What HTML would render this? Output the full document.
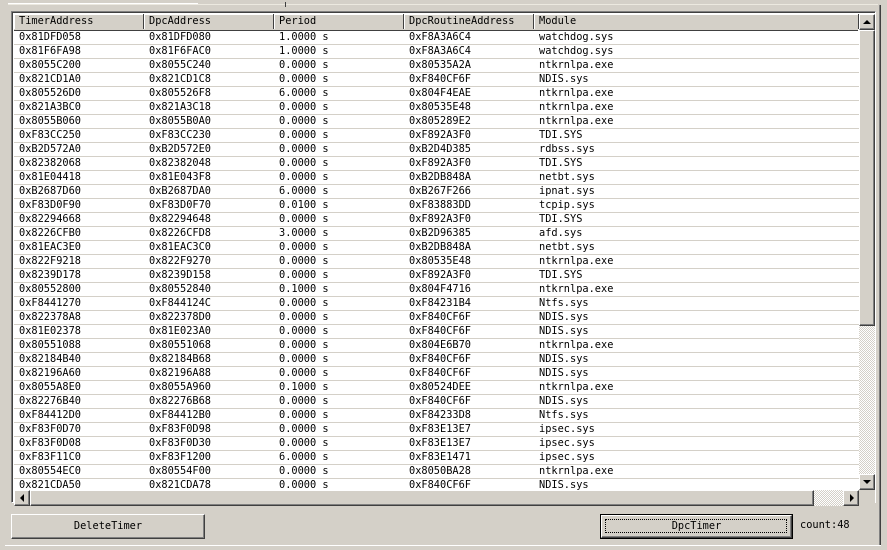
<!DOCTYPE html><html><head><style>
body{margin:0;width:887px;height:550px;background:#d4d0c8;position:relative;overflow:hidden;font-family:"DejaVu Sans Mono","Liberation Mono",monospace;font-size:10.3px;color:#000}
.lv{position:absolute;left:11px;top:11px;width:863px;height:490px;border-top:1px solid #808080;border-left:1px solid #808080;border-right:1px solid #fff;border-bottom:1px solid #fff;background:#fff}
.lv2{position:absolute;left:0;top:0;right:0;bottom:0;border-top:1px solid #404040;border-left:1px solid #404040}
.hdr{position:absolute;left:1px;top:1px;height:16px;width:844px;background:#d4d0c8;border-bottom:1px solid #404040}
.hc{position:absolute;top:0;height:15px;line-height:15px;padding-left:5px;border-right:1px solid #404040;box-shadow:inset 1px 1px #fff;box-sizing:border-box}
.rows{position:absolute;left:1px;top:18px;width:845px;height:459px;overflow:hidden}
.r{height:14px;line-height:13px;border-bottom:1px solid #d4d0c8;position:relative;box-sizing:border-box}
.r span{position:absolute;top:0}
.vs{position:absolute;left:846px;top:1px;width:16px;height:476px;background:repeating-conic-gradient(#d4d0c8 0 25%,#fff 0 50%) 0 0/2px 2px}
.hs{position:absolute;left:1px;top:477px;width:845px;height:16px;background:repeating-conic-gradient(#d4d0c8 0 25%,#fff 0 50%) 0 0/2px 2px}
.btn{position:absolute;background:#d4d0c8;border-top:1px solid #fff;border-left:1px solid #fff;border-right:1px solid #404040;border-bottom:1px solid #404040;box-shadow:inset -1px -1px #808080;box-sizing:border-box}
.tri{position:absolute;width:0;height:0}
</style></head><body>
<div style="position:absolute;left:8px;top:3px;width:190px;height:1px;background:#fff"></div>
<div style="position:absolute;left:8px;top:4px;width:870px;height:1px;background:#ece9e0"></div>
<div style="position:absolute;left:285px;top:2px;width:1px;height:5px;background:#404040"></div>
<div style="position:absolute;left:879px;top:5px;width:1px;height:540px;background:#808080"></div>
<div style="position:absolute;left:880px;top:5px;width:1px;height:540px;background:#404040"></div>
<div style="position:absolute;left:5px;top:545px;width:876px;height:1px;background:#fff"></div>
<div class="lv"><div class="lv2">
<div class="hdr">
<div class="hc" style="left:0;width:130px">TimerAddress</div>
<div class="hc" style="left:130px;width:130px">DpcAddress</div>
<div class="hc" style="left:260px;width:130px">Period</div>
<div class="hc" style="left:390px;width:130px">DpcRoutineAddress</div>
<div class="hc" style="left:520px;width:325px">Module</div>
</div>
<div class="rows" id="rows">
<div class="r"><span style="left:5px">0x81DFD058</span><span style="left:135px">0x81DFD080</span><span style="left:265px">1.0000 s</span><span style="left:395px">0xF8A3A6C4</span><span style="left:525px">watchdog.sys</span></div>
<div class="r"><span style="left:5px">0x81F6FA98</span><span style="left:135px">0x81F6FAC0</span><span style="left:265px">1.0000 s</span><span style="left:395px">0xF8A3A6C4</span><span style="left:525px">watchdog.sys</span></div>
<div class="r"><span style="left:5px">0x8055C200</span><span style="left:135px">0x8055C240</span><span style="left:265px">0.0000 s</span><span style="left:395px">0x80535A2A</span><span style="left:525px">ntkrnlpa.exe</span></div>
<div class="r"><span style="left:5px">0x821CD1A0</span><span style="left:135px">0x821CD1C8</span><span style="left:265px">0.0000 s</span><span style="left:395px">0xF840CF6F</span><span style="left:525px">NDIS.sys</span></div>
<div class="r"><span style="left:5px">0x805526D0</span><span style="left:135px">0x805526F8</span><span style="left:265px">6.0000 s</span><span style="left:395px">0x804F4EAE</span><span style="left:525px">ntkrnlpa.exe</span></div>
<div class="r"><span style="left:5px">0x821A3BC0</span><span style="left:135px">0x821A3C18</span><span style="left:265px">0.0000 s</span><span style="left:395px">0x80535E48</span><span style="left:525px">ntkrnlpa.exe</span></div>
<div class="r"><span style="left:5px">0x8055B060</span><span style="left:135px">0x8055B0A0</span><span style="left:265px">0.0000 s</span><span style="left:395px">0x805289E2</span><span style="left:525px">ntkrnlpa.exe</span></div>
<div class="r"><span style="left:5px">0xF83CC250</span><span style="left:135px">0xF83CC230</span><span style="left:265px">0.0000 s</span><span style="left:395px">0xF892A3F0</span><span style="left:525px">TDI.SYS</span></div>
<div class="r"><span style="left:5px">0xB2D572A0</span><span style="left:135px">0xB2D572E0</span><span style="left:265px">0.0000 s</span><span style="left:395px">0xB2D4D385</span><span style="left:525px">rdbss.sys</span></div>
<div class="r"><span style="left:5px">0x82382068</span><span style="left:135px">0x82382048</span><span style="left:265px">0.0000 s</span><span style="left:395px">0xF892A3F0</span><span style="left:525px">TDI.SYS</span></div>
<div class="r"><span style="left:5px">0x81E04418</span><span style="left:135px">0x81E043F8</span><span style="left:265px">0.0000 s</span><span style="left:395px">0xB2DB848A</span><span style="left:525px">netbt.sys</span></div>
<div class="r"><span style="left:5px">0xB2687D60</span><span style="left:135px">0xB2687DA0</span><span style="left:265px">6.0000 s</span><span style="left:395px">0xB267F266</span><span style="left:525px">ipnat.sys</span></div>
<div class="r"><span style="left:5px">0xF83D0F90</span><span style="left:135px">0xF83D0F70</span><span style="left:265px">0.0100 s</span><span style="left:395px">0xF83883DD</span><span style="left:525px">tcpip.sys</span></div>
<div class="r"><span style="left:5px">0x82294668</span><span style="left:135px">0x82294648</span><span style="left:265px">0.0000 s</span><span style="left:395px">0xF892A3F0</span><span style="left:525px">TDI.SYS</span></div>
<div class="r"><span style="left:5px">0x8226CFB0</span><span style="left:135px">0x8226CFD8</span><span style="left:265px">3.0000 s</span><span style="left:395px">0xB2D96385</span><span style="left:525px">afd.sys</span></div>
<div class="r"><span style="left:5px">0x81EAC3E0</span><span style="left:135px">0x81EAC3C0</span><span style="left:265px">0.0000 s</span><span style="left:395px">0xB2DB848A</span><span style="left:525px">netbt.sys</span></div>
<div class="r"><span style="left:5px">0x822F9218</span><span style="left:135px">0x822F9270</span><span style="left:265px">0.0000 s</span><span style="left:395px">0x80535E48</span><span style="left:525px">ntkrnlpa.exe</span></div>
<div class="r"><span style="left:5px">0x8239D178</span><span style="left:135px">0x8239D158</span><span style="left:265px">0.0000 s</span><span style="left:395px">0xF892A3F0</span><span style="left:525px">TDI.SYS</span></div>
<div class="r"><span style="left:5px">0x80552800</span><span style="left:135px">0x80552840</span><span style="left:265px">0.1000 s</span><span style="left:395px">0x804F4716</span><span style="left:525px">ntkrnlpa.exe</span></div>
<div class="r"><span style="left:5px">0xF8441270</span><span style="left:135px">0xF844124C</span><span style="left:265px">0.0000 s</span><span style="left:395px">0xF84231B4</span><span style="left:525px">Ntfs.sys</span></div>
<div class="r"><span style="left:5px">0x822378A8</span><span style="left:135px">0x822378D0</span><span style="left:265px">0.0000 s</span><span style="left:395px">0xF840CF6F</span><span style="left:525px">NDIS.sys</span></div>
<div class="r"><span style="left:5px">0x81E02378</span><span style="left:135px">0x81E023A0</span><span style="left:265px">0.0000 s</span><span style="left:395px">0xF840CF6F</span><span style="left:525px">NDIS.sys</span></div>
<div class="r"><span style="left:5px">0x80551088</span><span style="left:135px">0x80551068</span><span style="left:265px">0.0000 s</span><span style="left:395px">0x804E6B70</span><span style="left:525px">ntkrnlpa.exe</span></div>
<div class="r"><span style="left:5px">0x82184B40</span><span style="left:135px">0x82184B68</span><span style="left:265px">0.0000 s</span><span style="left:395px">0xF840CF6F</span><span style="left:525px">NDIS.sys</span></div>
<div class="r"><span style="left:5px">0x82196A60</span><span style="left:135px">0x82196A88</span><span style="left:265px">0.0000 s</span><span style="left:395px">0xF840CF6F</span><span style="left:525px">NDIS.sys</span></div>
<div class="r"><span style="left:5px">0x8055A8E0</span><span style="left:135px">0x8055A960</span><span style="left:265px">0.1000 s</span><span style="left:395px">0x80524DEE</span><span style="left:525px">ntkrnlpa.exe</span></div>
<div class="r"><span style="left:5px">0x82276B40</span><span style="left:135px">0x82276B68</span><span style="left:265px">0.0000 s</span><span style="left:395px">0xF840CF6F</span><span style="left:525px">NDIS.sys</span></div>
<div class="r"><span style="left:5px">0xF84412D0</span><span style="left:135px">0xF84412B0</span><span style="left:265px">0.0000 s</span><span style="left:395px">0xF84233D8</span><span style="left:525px">Ntfs.sys</span></div>
<div class="r"><span style="left:5px">0xF83F0D70</span><span style="left:135px">0xF83F0D98</span><span style="left:265px">0.0000 s</span><span style="left:395px">0xF83E13E7</span><span style="left:525px">ipsec.sys</span></div>
<div class="r"><span style="left:5px">0xF83F0D08</span><span style="left:135px">0xF83F0D30</span><span style="left:265px">0.0000 s</span><span style="left:395px">0xF83E13E7</span><span style="left:525px">ipsec.sys</span></div>
<div class="r"><span style="left:5px">0xF83F11C0</span><span style="left:135px">0xF83F1200</span><span style="left:265px">6.0000 s</span><span style="left:395px">0xF83E1471</span><span style="left:525px">ipsec.sys</span></div>
<div class="r"><span style="left:5px">0x80554EC0</span><span style="left:135px">0x80554F00</span><span style="left:265px">0.0000 s</span><span style="left:395px">0x8050BA28</span><span style="left:525px">ntkrnlpa.exe</span></div>
<div class="r"><span style="left:5px">0x821CDA50</span><span style="left:135px">0x821CDA78</span><span style="left:265px">0.0000 s</span><span style="left:395px">0xF840CF6F</span><span style="left:525px">NDIS.sys</span></div>
</div>
<div class="vs">
<div class="btn" style="left:0;top:0;width:16px;height:16px"><div class="tri" style="left:3px;top:5px;border-left:4px solid transparent;border-right:4px solid transparent;border-bottom:4px solid #000"></div></div>
<div class="btn" style="left:0;top:16px;width:16px;height:296px"></div>
<div class="btn" style="left:0;top:460px;width:16px;height:16px"><div class="tri" style="left:3px;top:5px;border-left:4px solid transparent;border-right:4px solid transparent;border-top:4px solid #000"></div></div>
</div>
<div class="hs">
<div class="btn" style="left:0;top:0;width:16px;height:16px"><div class="tri" style="left:5px;top:3px;border-top:4px solid transparent;border-bottom:4px solid transparent;border-right:4px solid #000"></div></div>
<div class="btn" style="left:16px;top:0;width:784px;height:16px"></div>
<div class="btn" style="left:829px;top:0;width:16px;height:16px"><div class="tri" style="left:6px;top:3px;border-top:4px solid transparent;border-bottom:4px solid transparent;border-left:4px solid #000"></div></div>
</div>
<div style="position:absolute;left:846px;top:477px;width:16px;height:16px;background:#d4d0c8"></div>
</div></div>
<div class="btn" style="left:11px;top:514px;width:194px;height:25px;text-align:center;line-height:22px">DeleteTimer</div>
<div style="position:absolute;left:600px;top:514px;width:193px;height:25px;border:1px solid #000;box-sizing:border-box">
<div class="btn" style="left:0;top:0;width:191px;height:23px;text-align:center;line-height:20px"><div style="position:absolute;left:3px;top:3px;right:4px;bottom:4px;border:1px dotted #000"></div>DpcTimer</div></div>
<div style="position:absolute;left:800px;top:518px;line-height:14px">count:48</div>
</body></html>
